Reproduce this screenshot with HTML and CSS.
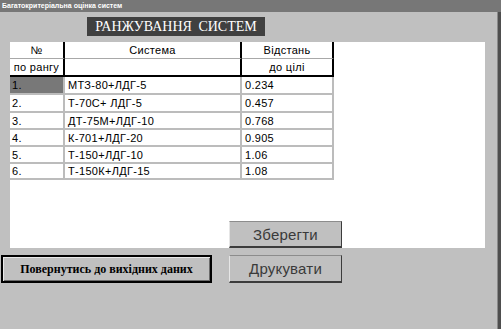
FILE: index.html
```html
<!DOCTYPE html>
<html lang="uk">
<head>
<meta charset="utf-8">
<link rel="stylesheet" href="styles.css">
</head>
<body>
<div class="window">
  <div class="titlebar">Багатокритеріальна оцінка систем</div>
  <div class="content">
    <div class="main">
      <div class="heading">РАНЖУВАННЯ СИСТЕМ</div>
      <div class="panel">
        <div class="grid">
          <div class="c h1 col1 ctr">№</div>
          <div class="c h1 col2 ctr">Система</div>
          <div class="c h1 col3 ctr">Відстань</div>
          <div class="c h2 col1 ctr">по рангу</div>
          <div class="c h2 col2 ctr"></div>
          <div class="c h2 col3 ctr">до цілі</div>

          <div class="c d col1 sel">1.</div>
          <div class="c d col2">МТЗ-80+ЛДГ-5</div>
          <div class="c d col3">0.234</div>

          <div class="c d col1">2.</div>
          <div class="c d col2">Т-70С+ ЛДГ-5</div>
          <div class="c d col3">0.457</div>

          <div class="c d col1">3.</div>
          <div class="c d col2">ДТ-75М+ЛДГ-10</div>
          <div class="c d col3">0.768</div>

          <div class="c d col1">4.</div>
          <div class="c d col2">К-701+ЛДГ-20</div>
          <div class="c d col3">0.905</div>

          <div class="c d col1">5.</div>
          <div class="c d col2">Т-150+ЛДГ-10</div>
          <div class="c d col3">1.06</div>

          <div class="c d col1">6.</div>
          <div class="c d col2">Т-150К+ЛДГ-15</div>
          <div class="c d col3">1.08</div>
        </div>
        <button class="btn flat save">Зберегти</button>
      </div>
      <div class="actions">
        <button class="btn back">Повернутись до вихідних даних</button>
        <button class="btn flat print">Друкувати</button>
      </div>
    </div>
    <div class="edge"></div>
  </div>
</div>
</body>
</html>
```

FILE: styles.css
```css
* { box-sizing: border-box; }
html, body { margin: 0; padding: 0; }
body {
  background: #c0c0c0;
  font-family: "Liberation Sans", Arial, sans-serif;
  width: 501px;
  height: 329px;
  overflow: hidden;
}
.window {
  width: 501px;
  height: 329px;
  display: flex;
  flex-direction: column;
}
.titlebar {
  height: 12px;
  background: #777777;
  color: #ffffff;
  font-family: "Liberation Sans", Arial, sans-serif;
  font-weight: bold;
  font-size: 7px;
  line-height: 12px;
  padding-left: 2px;
  white-space: nowrap;
}
.content {
  flex: 1;
  display: flex;
}
.main {
  flex: 1;
  display: flex;
  flex-direction: column;
  padding-top: 5px;
}
.edge {
  width: 4px;
  background: #4e4e4e;
  border-left: 1px solid #8a8a8a;
}
.heading {
  margin-left: 87px;
  width: 178px;
  height: 19px;
  background: #404040;
  color: #ffffff;
  font-family: "Liberation Serif", "Times New Roman", serif;
  font-size: 14px;
  line-height: 19px;
  text-align: center;
  word-spacing: 3px;
  white-space: nowrap;
}
.panel {
  margin-top: 6px;
  margin-left: 10px;
  width: 475px;
  height: 206px;
  background: #ffffff;
  display: flex;
  flex-direction: column;
  justify-content: space-between;
}
.grid {
  display: grid;
  grid-template-columns: 55px 177px 92px;
  grid-template-rows: 17px 18px 18px 18px 17px 17px 17px 16px;
  width: 324px;
  font-size: 11px;
  letter-spacing: 0.3px;
  color: #000000;
}
.c {
  display: flex;
  align-items: center;
  white-space: nowrap;
  overflow: hidden;
}
.ctr { justify-content: center; }
.h1 {
  border-right: 2px solid #000000;
  border-bottom: 1px solid #a8a8a8;
}
.h2 {
  border-right: 2px solid #000000;
  border-bottom: 2px solid #000000;
}
.d {
  border-right: 2px solid #bcbcbc;
  border-bottom: 2px solid #bcbcbc;
}
.d.col1 { padding-left: 2px; }
.d.col2, .d.col3 { padding-left: 3px; }
.sel { background: #787878; }
.btn {
  margin: 0;
  padding: 0;
  cursor: default;
  background: #c0c0c0;
}
.flat {
  width: 113px;
  height: 27px;
  border-style: solid;
  border-width: 1px 1px 2px 1px;
  border-color: #8c8c8c #3c3c3c #3c3c3c #e6e6e6;
  font-family: "Liberation Sans", Arial, sans-serif;
  font-size: 15px;
  color: #3a3a3a;
  letter-spacing: 0.2px;
}
.save {
  align-self: flex-start;
  margin-left: 219px;
}
.actions {
  margin-top: 7px;
  display: flex;
  gap: 17px;
  padding-left: 1px;
}
.print { height: 28px; }
.back {
  width: 211px;
  height: 28px;
  border: 2px solid #000000;
  box-shadow: inset 1px 1px 0 #e8e8e8, inset -1px -1px 0 #6a6a6a;
  font-family: "Liberation Serif", "Times New Roman", serif;
  font-weight: bold;
  font-size: 12px;
  color: #000000;
}
```
